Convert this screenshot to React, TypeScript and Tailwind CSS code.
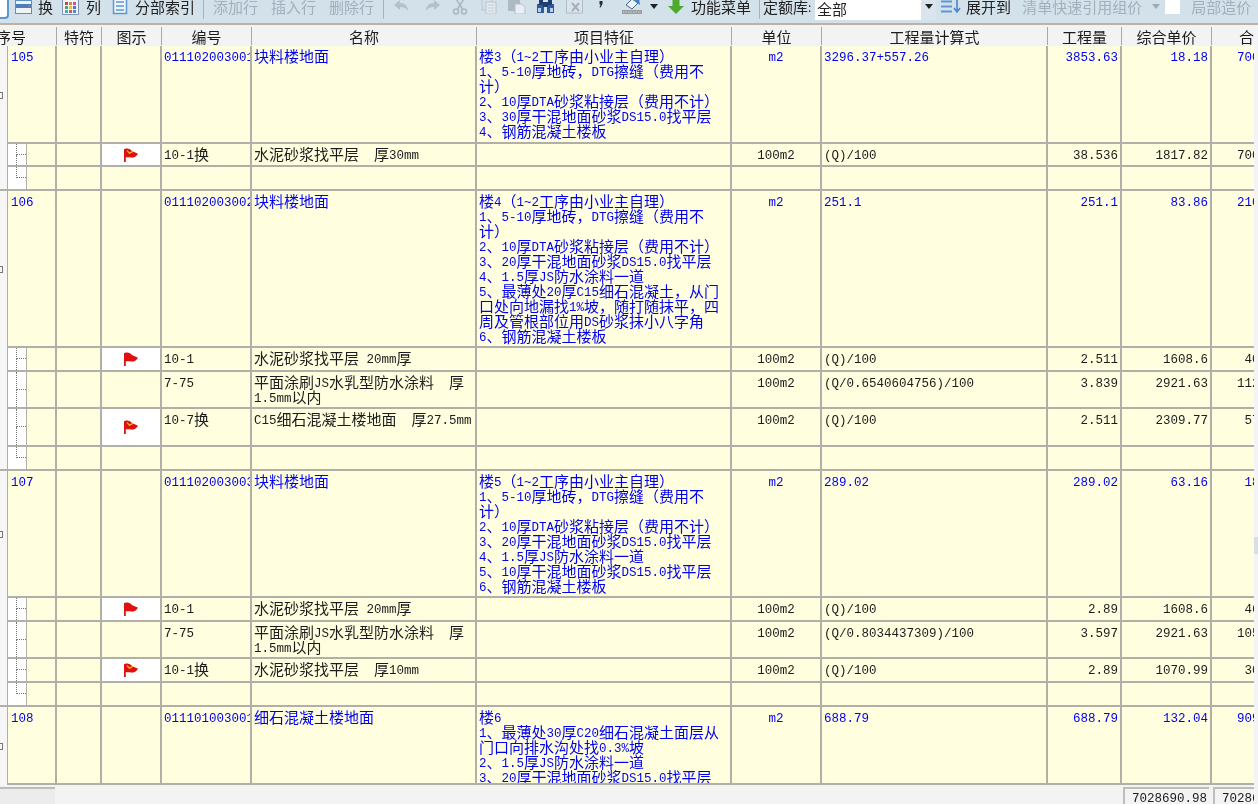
import React from "react";

const W = [57, 45, 60, 90, 225, 255, 90, 226, 74, 90, 42];
const HEAD = ["序号", "特符", "图示", "编号", "名称", "项目特征", "单位", "工程量计算式", "工程量", "综合单价", "合价"];

function T({ s }: { s: string }) {
  const parts = s.split(/([\x20-\x7e]+)/).filter(Boolean);
  return (
    <div className="h-[15px] whitespace-nowrap">
      {parts.map((p, i) =>
        /^[\x20-\x7e]/.test(p) ? (
          <span key={i} className="font-['Liberation_Mono',monospace] text-[12.5px] whitespace-pre align-[1px]">
            {p}
          </span>
        ) : (
          <span key={i}>{p}</span>
        )
      )}
    </div>
  );
}

function Flag({ mark }: { mark?: boolean }) {
  return (
    <svg width="15" height="14" viewBox="0 0 15 14" className="-ml-[1px]">
      <rect x="1" y="1" width="1.8" height="13" fill="#d81414" />
      <path d="M2 0.8 C5 0 7 1 8.5 2.5 C10 4 12 4 14.8 5.6 C14 8.6 11 10 8.5 9.6 C6 9.2 4 9 2 9.6 Z" fill="#e01010" />
      {mark && <path d="M4 2.6 L6.5 5.2 L9.8 3.4" stroke="#f5c518" strokeWidth="1.2" fill="none" />}
    </svg>
  );
}

type Row = {
  h: number;
  kind: "parent" | "sub" | "blank";
  no?: string;
  flag?: "plain" | "mark";
  code?: string;
  name?: string[];
  feat?: string[];
  unit?: string;
  formula?: string;
  qty?: string;
  price?: string;
  total?: string;
  end?: boolean;
};

const F1 = "1、5-10厚地砖，DTG擦缝（费用不";
const F2 = "2、10厚DTA砂浆粘接层（费用不计）";

const ROWS: Row[] = [
  { h: 98, kind: "parent", no: "105", code: "011102003001", name: ["块料楼地面"], unit: "m2", formula: "3296.37+557.26", qty: "3853.63", price: "18.18", total: "70059.00",
    feat: ["楼3（1~2工序由小业主自理）", F1, "计）", F2, "3、30厚干混地面砂浆DS15.0找平层", "4、钢筋混凝土楼板"] },
  { h: 23, kind: "sub", flag: "mark", code: "10-1换", name: ["水泥砂浆找平层  厚30mm"], unit: "100m2", formula: "(Q)/100", qty: "38.536", price: "1817.82", total: "70051.51" },
  { h: 24, kind: "blank", end: true },
  { h: 157, kind: "parent", no: "106", code: "011102003002", name: ["块料楼地面"], unit: "m2", formula: "251.1", qty: "251.1", price: "83.86", total: "21057.25",
    feat: ["楼4（1~2工序由小业主自理）", F1, "计）", F2, "3、20厚干混地面砂浆DS15.0找平层", "4、1.5厚JS防水涂料一道", "5、最薄处20厚C15细石混凝土，从门", "口处向地漏找1%坡，随打随抹平，四", "周及管根部位用DS砂浆抹小八字角", "6、钢筋混凝土楼板"] },
  { h: 24, kind: "sub", flag: "plain", code: "10-1", name: ["水泥砂浆找平层 20mm厚"], unit: "100m2", formula: "(Q)/100", qty: "2.511", price: "1608.6", total: "4039.20" },
  { h: 37, kind: "sub", code: "7-75", name: ["平面涂刷JS水乳型防水涂料  厚", "1.5mm以内"], unit: "100m2", formula: "(Q/0.6540604756)/100", qty: "3.839", price: "2921.63", total: "11216.14" },
  { h: 38, kind: "sub", flag: "mark", code: "10-7换", name: ["C15细石混凝土楼地面  厚27.5mm"], unit: "100m2", formula: "(Q)/100", qty: "2.511", price: "2309.77", total: "5799.83" },
  { h: 24, kind: "blank", end: true },
  { h: 127, kind: "parent", no: "107", code: "011102003003", name: ["块料楼地面"], unit: "m2", formula: "289.02", qty: "289.02", price: "63.16", total: "18254.5",
    feat: ["楼5（1~2工序由小业主自理）", F1, "计）", F2, "3、20厚干混地面砂浆DS15.0找平层", "4、1.5厚JS防水涂料一道", "5、10厚干混地面砂浆DS15.0找平层", "6、钢筋混凝土楼板"] },
  { h: 24, kind: "sub", flag: "plain", code: "10-1", name: ["水泥砂浆找平层 20mm厚"], unit: "100m2", formula: "(Q)/100", qty: "2.89", price: "1608.6", total: "4648.85" },
  { h: 37, kind: "sub", code: "7-75", name: ["平面涂刷JS水乳型防水涂料  厚", "1.5mm以内"], unit: "100m2", formula: "(Q/0.8034437309)/100", qty: "3.597", price: "2921.63", total: "10509.10" },
  { h: 24, kind: "sub", flag: "mark", code: "10-1换", name: ["水泥砂浆找平层  厚10mm"], unit: "100m2", formula: "(Q)/100", qty: "2.89", price: "1070.99", total: "3095.16" },
  { h: 24, kind: "blank", end: true },
  { h: 78, kind: "parent", no: "108", code: "011101003001", name: ["细石混凝土楼地面"], unit: "m2", formula: "688.79", qty: "688.79", price: "132.04", total: "90947.83",
    feat: ["楼6", "1、最薄处30厚C20细石混凝土面层从", "门口向排水沟处找0.3%坡", "2、1.5厚JS防水涂料一道", "3、20厚干混地面砂浆DS15.0找平层"] },
];

const cellBase = "shrink-0 h-full border-r-2 border-[#b0b0a8] overflow-hidden";

function Tree({ last }: { last: boolean }) {
  return (
    <div className="w-[20px] h-full bg-white border-x border-[#b0b0a8] pl-[8px] flex flex-col shrink-0">
      <div className="h-1/2 w-[10px] border-l border-b border-dotted border-[#777]" />
      {!last && <div className="h-1/2 w-[10px] border-l border-dotted border-[#777]" />}
    </div>
  );
}

function DataRow({ r }: { r: Row }) {
  const parent = r.kind === "parent";
  const color = parent ? "text-[#0000f0]" : "text-[#1c1c1c]";
  return (
    <div className={`flex shrink-0 border-b-2 border-[#b0b0a8] ${color}`} style={{ height: r.h }}>
      <div className={`w-[7px] shrink-0 bg-[#f6f6f6] flex items-center ${r.end ? "h-full" : "h-[calc(100%+2px)]"}`}>
        {parent && <div className="w-[3px] h-[7px] border-y border-r border-[#777]" />}
      </div>
      <div className={`${cellBase} w-[50px] bg-[#ffffe0] flex ${parent ? "border-l border-l-[#b0b0a8]" : ""}`}>
        {parent ? <div className="pl-[3px] pt-[2px]"><T s={r.no!} /></div> : <Tree last={r.kind === "blank"} />}
      </div>
      <div className={`${cellBase} w-[45px] bg-[#ffffe0]`} />
      <div className={`${cellBase} w-[60px] flex items-center justify-center ${r.flag ? "bg-white" : "bg-[#ffffe0]"}`}>
        {r.flag && <Flag mark={r.flag === "mark"} />}
      </div>
      <div className={`${cellBase} w-[90px] bg-[#ffffe0] pl-[2px] pt-[2px]`}>
        {r.code && <T s={r.code} />}
      </div>
      <div className={`${cellBase} w-[225px] bg-[#ffffe0] pl-[2px] pt-[2px]`}>
        {r.name?.map((n, i) => <T key={i} s={n} />)}
      </div>
      <div className={`${cellBase} w-[255px] bg-[#ffffe0] pl-[2px] pt-[2px]`}>
        {r.feat?.map((n, i) => <T key={i} s={n} />)}
      </div>
      <div className={`${cellBase} w-[90px] bg-[#ffffe0] pt-[2px] text-center`}>{r.unit && <T s={r.unit} />}</div>
      <div className={`${cellBase} w-[226px] bg-[#ffffe0] pl-[2px] pt-[2px]`}>
        {r.formula && <T s={r.formula} />}
      </div>
      <div className={`${cellBase} w-[74px] bg-[#ffffe0] pr-[2px] pt-[2px] text-right`}>{r.qty && <T s={r.qty} />}</div>
      <div className={`${cellBase} w-[90px] bg-[#ffffe0] pr-[2px] pt-[2px] text-right`}>{r.price && <T s={r.price} />}</div>
      <div className="shrink-0 h-full w-[42px] bg-[#ffffe0] overflow-hidden pt-[2px]">
        <div className="w-[85px] text-right">{r.total && <T s={r.total} />}</div>
      </div>
    </div>
  );
}

function Sep() {
  return <div className="w-px h-[24px] bg-[#9fb6c8] shrink-0" />;
}

function BarIcon() {
  return (
    <svg width="17" height="14" viewBox="0 0 17 14" className="shrink-0">
      <rect x="0.5" y="0.5" width="16" height="13" fill="#eef3f8" stroke="#5b8fc7" />
      <rect x="1" y="4" width="15" height="4" fill="#4a7fbd" />
      <rect x="13" y="5" width="2" height="2" fill="#c66" />
    </svg>
  );
}
function GridIcon() {
  return (
    <svg width="17" height="16" viewBox="0 0 17 16" className="shrink-0">
      <rect x="0.5" y="0.5" width="16" height="15" fill="#f2f4f8" stroke="#7d97b5" />
      {[["#c04a4a", "#d9883a", "#c94fa5"], ["#4aa55a", "#e0c23a", "#5a6fd0"], ["#3fb0c0", "#d05a5a", "#4a8fd0"]].map((row, y) =>
        row.map((c, x) => <rect key={`${x}${y}`} x={3 + x * 4} y={3 + y * 4} width="3" height="3" fill={c} />)
      )}
    </svg>
  );
}
function DocIcon() {
  return (
    <svg width="18" height="16" viewBox="0 0 18 16" className="shrink-0">
      <path d="M2.5 0 V14.5 H15.5 V0" fill="#eef4fa" stroke="#5f97d2" strokeWidth="1.5" />
      <path d="M5 3 H13 M5 7 H13 M5 11 H13" stroke="#5f97d2" strokeWidth="1.4" />
    </svg>
  );
}
function Undo({ flip }: { flip?: boolean }) {
  return (
    <svg width="16" height="13" viewBox="0 0 16 13" className="shrink-0" style={flip ? { transform: "scaleX(-1)" } : undefined}>
      <path d="M1 5 L7 0 V3 C12 3 15 6 15 11 C13 8 11 7 7 7 V10 Z" fill="#b4c0ca" />
    </svg>
  );
}
function Scissors() {
  return (
    <svg width="16" height="16" viewBox="0 0 16 16" className="shrink-0">
      <path d="M3 -2 L11 11 M13 -2 L5 11" stroke="#aab8c4" strokeWidth="1.6" />
      <circle cx="4" cy="12.5" r="2.5" fill="none" stroke="#aab8c4" strokeWidth="1.5" />
      <circle cx="12" cy="12.5" r="2.5" fill="none" stroke="#aab8c4" strokeWidth="1.5" />
    </svg>
  );
}
function Copy() {
  return (
    <svg width="18" height="14" viewBox="0 0 18 14" className="shrink-0">
      <rect x="2" y="-2" width="10" height="12" fill="#d5dfe7" stroke="#b8c4ce" />
      <rect x="6" y="2" width="10" height="12" fill="#e2eaf0" stroke="#b8c4ce" />
      <path d="M8 5 H14 M8 8 H14 M8 11 H14" stroke="#c2ccd5" />
    </svg>
  );
}
function Paste() {
  return (
    <svg width="18" height="15" viewBox="0 0 18 15" className="shrink-0">
      <rect x="0" y="-1" width="12" height="13" fill="#aeb9c3" />
      <path d="M7 5 H14 L17 8 V15 H7 Z" fill="#e9eff4" stroke="#b3bfc9" />
    </svg>
  );
}
function Binoculars() {
  return (
    <svg width="19" height="13" viewBox="0 0 19 13" className="shrink-0">
      <rect x="1" y="4" width="7" height="9" fill="#2d5a9a" />
      <rect x="11" y="4" width="7" height="9" fill="#2d5a9a" />
      <rect x="3" y="0" width="4" height="5" fill="#1f3f70" />
      <rect x="12" y="0" width="4" height="5" fill="#1f3f70" />
      <rect x="7" y="2" width="5" height="5" fill="#1f3f70" />
      <rect x="2" y="8" width="3" height="4" fill="#b8d0ea" />
      <rect x="14" y="8" width="3" height="4" fill="#b8d0ea" />
    </svg>
  );
}
function Excel() {
  return (
    <svg width="19" height="15" viewBox="0 0 19 15" className="shrink-0">
      <rect x="0.5" y="-1" width="16" height="15" fill="#dbe4eb" stroke="#b0bcc6" />
      <path d="M6 4 L13 12 M13 4 L6 12" stroke="#a4b0ba" strokeWidth="2" />
    </svg>
  );
}
function Comma() {
  return (
    <svg width="6" height="11" viewBox="0 0 6 11" className="shrink-0">
      <path d="M1.5 0 H4.5 V3 L2.5 6.5 H1.5 L2.5 3.5 H1.5 Z" fill="#2b2b2b" />
    </svg>
  );
}
function Brush() {
  return (
    <svg width="20" height="16" viewBox="0 0 20 16" className="shrink-0">
      <path d="M4 6 L10 0 L16 4 L10 10 Z" fill="#eef3f8" stroke="#40648c" />
      <path d="M12 -1 L17 -1 L18 6 L14 3 Z" fill="#3c82c8" />
      <rect x="0" y="11" width="20" height="4" fill="#9b9b9b" />
      <path d="M1 13 H19" stroke="#d5d5d5" strokeDasharray="1.5 1" />
    </svg>
  );
}
function Caret({ c = "#222" }: { c?: string }) {
  return (
    <svg width="8" height="5" viewBox="0 0 8 5" className="shrink-0">
      <path d="M0 0 H8 L4 5 Z" fill={c} />
    </svg>
  );
}
function DownArrow() {
  return (
    <svg width="16" height="14" viewBox="0 0 16 14" className="shrink-0">
      <path d="M4.5 0 H11.5 V6 H16 L8 14 L0 6 H4.5 Z" fill="#4eaa2c" />
    </svg>
  );
}
function ExpandIcon() {
  return (
    <svg width="21" height="14" viewBox="0 0 21 14" className="shrink-0">
      <path d="M0 1.5 H11 M0 6.5 H11 M0 11.5 H11" stroke="#5f97d2" strokeWidth="1.8" />
      <path d="M16 0 V11 M13 8 L16 12 L19 8" stroke="#4a86c8" strokeWidth="1.6" fill="none" />
    </svg>
  );
}

function Toolbar() {
  const dim = "text-[#a0b0bc]";
  return (
    <div className="h-[25px] shrink-0 bg-[#d3e1ea] border-b-2 border-[#bdb3a0] overflow-hidden">
      <div className="h-[13px] flex items-center whitespace-nowrap text-[#222]">
        <div className="w-[9px] h-[19px] self-start shrink-0 bg-white border-r-2 border-b-2 border-[#5f97d2] rounded-br-sm" />
        <div className="ml-[6px]"><BarIcon /></div>
        <span className="ml-[6px]">换</span>
        <div className="ml-[9px]"><GridIcon /></div>
        <span className="ml-[7px]">列</span>
        <div className="ml-[10px]"><DocIcon /></div>
        <span className="ml-[6px]">分部索引</span>
        <div className="ml-[8px]"><Sep /></div>
        <span className={`ml-[9px] ${dim}`}>添加行</span>
        <span className={`ml-[13px] ${dim}`}>插入行</span>
        <span className={`ml-[13px] ${dim}`}>删除行</span>
        <div className="ml-[9px]"><Sep /></div>
        <div className="ml-[9px]"><Undo /></div>
        <div className="ml-[16px]"><Undo flip /></div>
        <div className="ml-[11px]"><Scissors /></div>
        <div className="ml-[12px]"><Copy /></div>
        <div className="ml-[10px]"><Paste /></div>
        <div className="ml-[10px]"><Binoculars /></div>
        <div className="ml-[11px]"><Excel /></div>
        <div className="ml-[13px] w-[6px]"><Comma /></div>
        <div className="ml-[18px]"><Brush /></div>
        <div className="ml-[8px]"><Caret /></div>
        <div className="ml-[10px]"><DownArrow /></div>
        <span className="ml-[7px]">功能菜单</span>
        <div className="ml-[8px]"><Sep /></div>
        <span className="ml-[3px] w-[45px] shrink-0">定额库</span>
        <span className="w-[4px] shrink-0 text-[12px]">:</span>
        <div className="ml-[3px] w-[121px] h-[20px] self-start shrink-0 flex bg-white">
          <span className="pl-[2px] pt-[1px] w-[106px]">全部</span>
          <div className="w-[15px] h-[20px] bg-[#d9e4ec] flex justify-center pt-[4px]"><Caret /></div>
        </div>
        <div className="ml-[5px]"><ExpandIcon /></div>
        <span className="ml-[4px]">展开到</span>
        <span className={`ml-[11px] ${dim}`}>清单快速引用组价</span>
        <div className="ml-[10px]"><Caret c="#9aaab6" /></div>
        <div className="ml-[5px] w-[15px] h-[14px] self-start bg-white shrink-0" />
        <span className={`ml-[11px] ${dim}`}>局部造价</span>
      </div>
    </div>
  );
}

function Header() {
  return (
    <div className="h-[21px] shrink-0 flex bg-[#f3f3f3] text-[#1c1c1c]">
      {W.map((w, i) => (
        <div key={i} className="shrink-0 h-full pt-[2px] pb-[1px] overflow-hidden" style={{ width: w }}>
          <div className={`h-full flex items-center whitespace-nowrap ${i === 0 ? "justify-end pr-[30px]" : i === 10 ? "pl-[27px]" : "justify-center"} ${i < 10 ? "border-r border-[#a8a8a8]" : ""}`}>
            {HEAD[i]}
          </div>
        </div>
      ))}
    </div>
  );
}

function StatusBar() {
  return (
    <div className="flex-1 flex bg-[#f3f3f3] overflow-hidden text-[#1c1c1c]">
      <div className="w-[55px] mt-[2px] bg-[#ececec] border-t-2 border-[#bdbdbd] shrink-0" />
      <div className="flex-1" />
      <div className="w-[86px] mt-[2px] border-t-2 border-l-2 border-[#bdbdbd] text-right pr-[2px] shrink-0 overflow-hidden">
        <T s="7028690.98" />
      </div>
      <div className="w-[41px] ml-[4px] mr-[4px] mt-[2px] border-t-2 border-l-2 border-[#bdbdbd] pl-[7px] shrink-0 overflow-hidden">
        <T s="7028690.98" />
      </div>
    </div>
  );
}

export default function App() {
  return (
    <div className="w-[1258px] h-[804px] overflow-hidden flex flex-col bg-white text-[15px] leading-[15px] blur-[0.35px] font-['Noto_Sans_CJK_SC',sans-serif]">
      <Toolbar />
      <div className="flex h-[760px] shrink-0 overflow-hidden">
        <div className="w-[1254px] shrink-0 flex flex-col overflow-hidden">
          <Header />
          {ROWS.map((r, i) => <DataRow key={i} r={r} />)}
        </div>
        <div className="w-[4px] shrink-0 bg-[#f4f4f8]">
          <div className="w-[4px] h-[17px] mt-[512px] bg-[#d8dde8]" />
        </div>
      </div>
      <StatusBar />
    </div>
  );
}
